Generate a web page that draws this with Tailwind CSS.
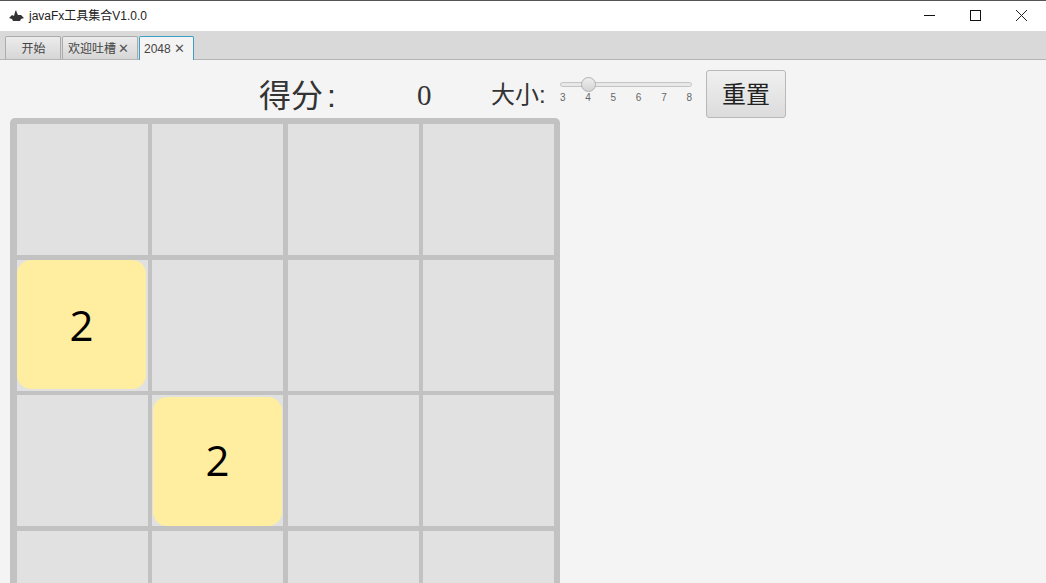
<!DOCTYPE html>
<html lang="zh">
<head>
    <meta charset="UTF-8">
    <title>javaFx工具集合V1.0.0</title>
    <script src="https://cdn.jsdelivr.net/npm/@tailwindcss/browser@4"></script>
</head>
<body class="w-[1046px] h-[583px] overflow-hidden bg-[#f4f4f4] font-['Liberation_Sans','Noto_Sans_CJK_SC',sans-serif]">
    <!-- title bar -->
    <div class="h-[31px] bg-white border-t border-[#555] flex items-center">
        <svg class="ml-[9px] w-[15px] h-[12px]" viewBox="0 0 15 12"><path d="M0 8 L3 5 L5 6 L6 2 L7 0 L8 3 L9 5 L12 5 L15 8 L12 9 L11 11 L4 11 L3 9 Z" fill="#333"/></svg>
        <span class="ml-[5px] text-[12px] text-[#222]">javaFx工具集合V1.0.0</span>
        <div class="ml-auto flex items-center">
            <svg class="w-[46px] h-[30px]" viewBox="0 0 46 30"><path d="M18 14.5 H29" stroke="#111" fill="none"/></svg>
            <svg class="w-[46px] h-[30px]" viewBox="0 0 46 30"><rect x="18.5" y="9.5" width="10" height="10" stroke="#111" fill="none"/></svg>
            <svg class="w-[46px] h-[30px] mr-[2px]" viewBox="0 0 46 30"><path d="M18 9 L29 20 M29 9 L18 20" stroke="#222" fill="none"/></svg>
        </div>
    </div>
    <!-- tabs -->
    <div class="h-[29px] bg-[#d9d9d9] border-b border-[#b5b5b5] flex items-end pl-[5px] gap-[1px]">
        <div class="w-[56px] h-[23px] pt-[1px] pl-[1px] bg-gradient-to-b from-[#ececec] to-[#d6d6d6] border border-b-0 border-[#ababab] rounded-t-[2px] flex items-center justify-center text-[12px] text-[#444]">开始</div>
        <div class="w-[76px] h-[23px] pt-[1px] bg-gradient-to-b from-[#ececec] to-[#d6d6d6] border border-b-0 border-[#ababab] rounded-t-[2px] flex items-center pl-[5px] text-[12px] text-[#444]">欢迎吐槽<span class="ml-[2px] text-[13px] text-[#555]">✕</span></div>
        <div class="w-[55px] h-[24px] pt-[1px] mb-[-1px] bg-[#f4f4f4] border border-b-0 border-[#3aa0c8] rounded-t-[2px] flex items-center pl-[4px] text-[12px] text-[#444]">2048<span class="ml-[3px] text-[13px] text-[#555]">✕</span></div>
    </div>
    <!-- toolbar -->
    <div class="h-[58px] pt-[14px] flex items-center text-[#333]">
        <span class="ml-[259px] w-[78px] text-[32px] leading-none whitespace-nowrap">得分<span class="ml-[4px]">:</span></span>
        <span class="ml-[79px] w-[17px] text-[29px] font-['Liberation_Serif','Noto_Sans_CJK_SC',serif] leading-none pl-[1px] mt-[-1px]">0</span>
        <span class="ml-[58px] w-[56px] text-[24px] leading-none whitespace-nowrap mt-[-2px]">大小:</span>
        <div class="ml-[13px] w-[132px] mt-[-1px]">
            <div class="relative h-[5px] mt-[-6px] bg-[#e8e8e8] border border-[#c4c4c4] rounded-full">
                <div class="absolute left-[20px] top-[-6px] w-[15px] h-[15px] rounded-full border border-[#b0b0b0] bg-gradient-to-b from-[#efefef] to-[#d4d4d4]"></div>
            </div>
            <div class="flex justify-between text-[10px] text-[#666] mt-[6px] leading-none"><span>3</span><span>4</span><span>5</span><span>6</span><span>7</span><span>8</span></div>
        </div>
        <button class="ml-[14px] w-[80px] h-[48px] mt-[-4px] pt-[2px] border border-[#b8b8b8] rounded-[3px] bg-gradient-to-b from-[#f0f0f0] to-[#dcdcdc] text-[24px] text-[#222]">重置</button>
    </div>
    <!-- board -->
    <div class="ml-[10px] w-[550px] h-[465px] overflow-hidden bg-[#c2c2c2] rounded-t-[5px] pt-[6px] pl-[6.5px] grid grid-cols-[repeat(4,131px)] auto-rows-[131px] gap-[4.5px]">
        <div class="bg-[#e1e1e1]"></div>
        <div class="bg-[#e1e1e1]"></div>
        <div class="bg-[#e1e1e1]"></div>
        <div class="bg-[#e1e1e1]"></div>
        <div class="bg-[#e1e1e1] pl-[0.5px] pr-[1.5px] pt-[0.5px] pb-[1.5px]"><div class="h-full bg-[#ffeda0] rounded-[14px] flex items-center justify-center pb-[1px] text-[42px] text-black font-['Open_Sans',sans-serif]">2</div></div>
        <div class="bg-[#e1e1e1]"></div>
        <div class="bg-[#e1e1e1]"></div>
        <div class="bg-[#e1e1e1]"></div>
        <div class="bg-[#e1e1e1]"></div>
        <div class="bg-[#e1e1e1] pl-[1px] pr-[1px] pt-[1.5px] pb-[0.5px]"><div class="h-full bg-[#ffeda0] rounded-[14px] flex items-center justify-center pb-[3px] text-[42px] text-black font-['Open_Sans',sans-serif]">2</div></div>
        <div class="bg-[#e1e1e1]"></div>
        <div class="bg-[#e1e1e1]"></div>
        <div class="bg-[#e1e1e1]"></div>
        <div class="bg-[#e1e1e1]"></div>
        <div class="bg-[#e1e1e1]"></div>
        <div class="bg-[#e1e1e1]"></div>
    </div>
</body>
</html>
